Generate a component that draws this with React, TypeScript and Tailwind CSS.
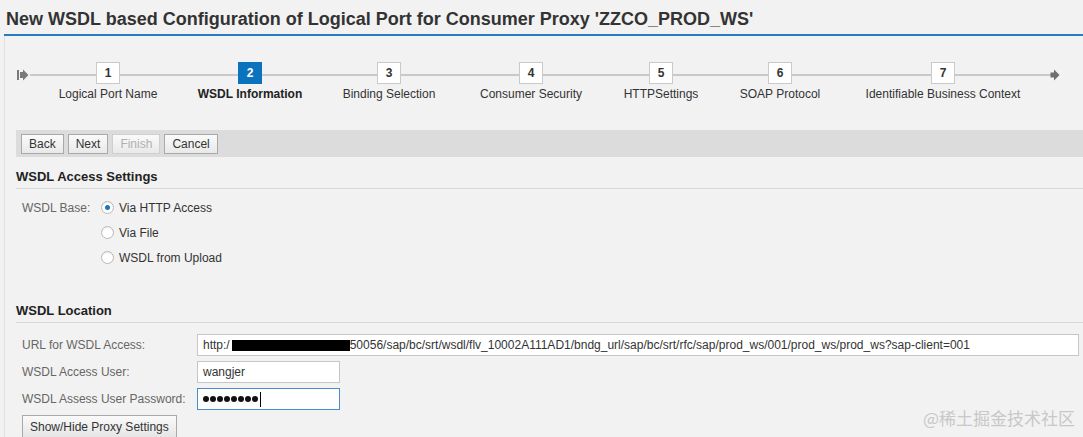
import React from "react";

const steps = [
  { n: "1", label: "Logical Port Name", w: "w-[142px]" },
  { n: "2", label: "WSDL Information", w: "w-[142px]", active: true },
  { n: "3", label: "Binding Selection", w: "w-[136px]" },
  { n: "4", label: "Consumer Security", w: "w-[148px]" },
  { n: "5", label: "HTTPSettings", w: "w-[112px]" },
  { n: "6", label: "SOAP Protocol", w: "w-[126px]" },
  { n: "7", label: "Identifiable Business Context", w: "w-[200px]" },
];

function Btn({ children, disabled }: { children: React.ReactNode; disabled?: boolean }) {
  return (
    <div
      className={
        "h-[20px] px-[7px] flex items-center border bg-gradient-to-b from-[#fafafa] to-[#e9e9e9] text-[12px] leading-none " +
        (disabled ? "border-[#cfcfcf] text-[#b0b0b0]" : "border-[#a9a9a9] text-[#333]")
      }
    >
      {children}
    </div>
  );
}

function Radio({ checked, label }: { checked?: boolean; label: string }) {
  return (
    <div className="h-[25px] flex items-center">
      <div className="w-[13px] h-[13px] rounded-full border border-[#b9b9b9] bg-white flex items-center justify-center shadow-[inset_0_1px_1px_rgba(0,0,0,0.08)]">
        {checked && <div className="w-[5px] h-[5px] rounded-full bg-[#1f74bd]" />}
      </div>
      <span className="ml-[5px] text-[12px] text-[#333]">{label}</span>
    </div>
  );
}

export default function App() {
  return (
    <div className="w-[1083px] h-[437px] overflow-hidden bg-[#f2f2f2] relative font-['Liberation_Sans',Arial,sans-serif]">
      {/* Title */}
      <div className="h-[34px] pt-[8px] pl-[6px]">
        <div className="text-[18px] leading-[22px] font-bold text-[#333]">
          New WSDL based Configuration of Logical Port for Consumer Proxy 'ZZCO_PROD_WS'
        </div>
      </div>
      <div className="h-[2px] ml-[4px] bg-[#2a7bc0]" />

      <div className="ml-[4px] border-l border-[#e0e0e0] pl-[11px]">
        {/* Roadmap */}
        <div className="h-[94px] relative">
          <div className="absolute left-[14px] right-[32px] top-[38px] h-[2px] bg-[#c9c9c9]" />
          <svg className="absolute left-[0px] top-[33px]" width="13" height="12" viewBox="0 0 13 12">
            <rect x="1" y="1" width="2" height="10" fill="#7a7a7a" />
            <path d="M4 3 H7 V0.5 L12.5 6 L7 11.5 V9 H4 Z" fill="#7a7a7a" />
          </svg>
          <svg className="absolute left-[1034px] top-[33px]" width="10" height="12" viewBox="0 0 10 12">
            <path d="M0.5 3.5 H4 V0.5 L9.5 6 L4 11.5 V8.5 H0.5 Z" fill="#6f6f6f" />
          </svg>
          <div className="relative flex pl-[21px] pt-[26px]">
            {steps.map((s) => (
              <div key={s.n} className={s.w + " flex flex-col items-center"}>
                <div
                  className={
                    "w-[24px] h-[22px] flex items-center justify-center text-[12px] font-bold " +
                    (s.active
                      ? "bg-[#0b73be] text-white"
                      : "bg-white border border-[#cacaca] text-[#333]")
                  }
                >
                  {s.n}
                </div>
                <div
                  className={
                    "mt-[2px] text-[12px] leading-[16px] whitespace-nowrap " +
                    (s.active ? "font-bold text-[#222]" : "text-[#333]")
                  }
                >
                  {s.label}
                </div>
              </div>
            ))}
          </div>
        </div>

        {/* Button bar */}
        <div className="h-[27px] bg-[#dcdcdc] flex items-center pl-[5px] gap-[4px]">
          <Btn>Back</Btn>
          <Btn>Next</Btn>
          <Btn disabled>Finish</Btn>
          <Btn>Cancel</Btn>
        </div>

        {/* WSDL Access Settings */}
        <div className="mt-[12px] pb-[3px] border-b border-[#d8d8d8] text-[13px] leading-[16px] font-bold text-[#222]">
          WSDL Access Settings
        </div>
        <div className="mt-[6px] flex pl-[6px]">
          <div className="w-[79px] h-[25px] flex items-center text-[12px] text-[#666]">WSDL Base:</div>
          <div className="flex flex-col">
            <Radio checked label="Via HTTP Access" />
            <Radio label="Via File" />
            <Radio label="WSDL from Upload" />
          </div>
        </div>

        {/* WSDL Location */}
        <div className="mt-[33px] pb-[3px] border-b border-[#d8d8d8] text-[13px] leading-[16px] font-bold text-[#222]">
          WSDL Location
        </div>
        <div className="mt-[11px] flex flex-col gap-[5px] pl-[6px]">
          <div className="flex items-center h-[22px]">
            <div className="w-[175px] text-[12px] text-[#666]">URL for WSDL Access:</div>
            <div className="flex-1 mr-[4px] h-[22px] bg-white border border-[#c6c6c6] px-[5px] flex items-center text-[12px] text-[#333] whitespace-nowrap overflow-hidden">
              <span>http:/</span>
              <span className="inline-block ml-[2px] w-[118px] h-[11px] bg-black" />
              <span>50056/sap/bc/srt/wsdl/flv_10002A111AD1/bndg_url/sap/bc/srt/rfc/sap/prod_ws/001/prod_ws/prod_ws?sap-client=001</span>
            </div>
          </div>
          <div className="flex items-center h-[22px]">
            <div className="w-[175px] text-[12px] text-[#666]">WSDL Access User:</div>
            <div className="w-[143px] h-[22px] bg-white border border-[#c6c6c6] px-[5px] flex items-center text-[12px] text-[#333]">
              wangjer
            </div>
          </div>
          <div className="flex items-center h-[22px]">
            <div className="w-[175px] text-[12px] text-[#666]">WSDL Assess User Password:</div>
            <div className="w-[143px] h-[22px] bg-white border border-[#4a8dcc] px-[5px] flex items-center gap-[1px]">
              {[0, 1, 2, 3, 4, 5, 6, 7].map((i) => (
                <span key={i} className="inline-block w-[6px] h-[6px] rounded-full bg-[#111]" />
              ))}
              <span className="inline-block w-[1px] h-[15px] bg-black ml-[1px]" />
            </div>
          </div>
          <div className="flex">
            <div className="h-[23px] px-[7px] flex items-center border border-[#a9a9a9] bg-gradient-to-b from-[#fafafa] to-[#e6e6e6] text-[12px] text-[#333]">
              Show/Hide Proxy Settings
            </div>
          </div>
        </div>
      </div>

      {/* Watermark */}
      <div className="absolute right-[8px] bottom-[9px] text-[17px] leading-[20px] text-[#c8c8c8] font-['Noto_Sans_CJK_SC',sans-serif]">
        @稀土掘金技术社区
      </div>
    </div>
  );
}
